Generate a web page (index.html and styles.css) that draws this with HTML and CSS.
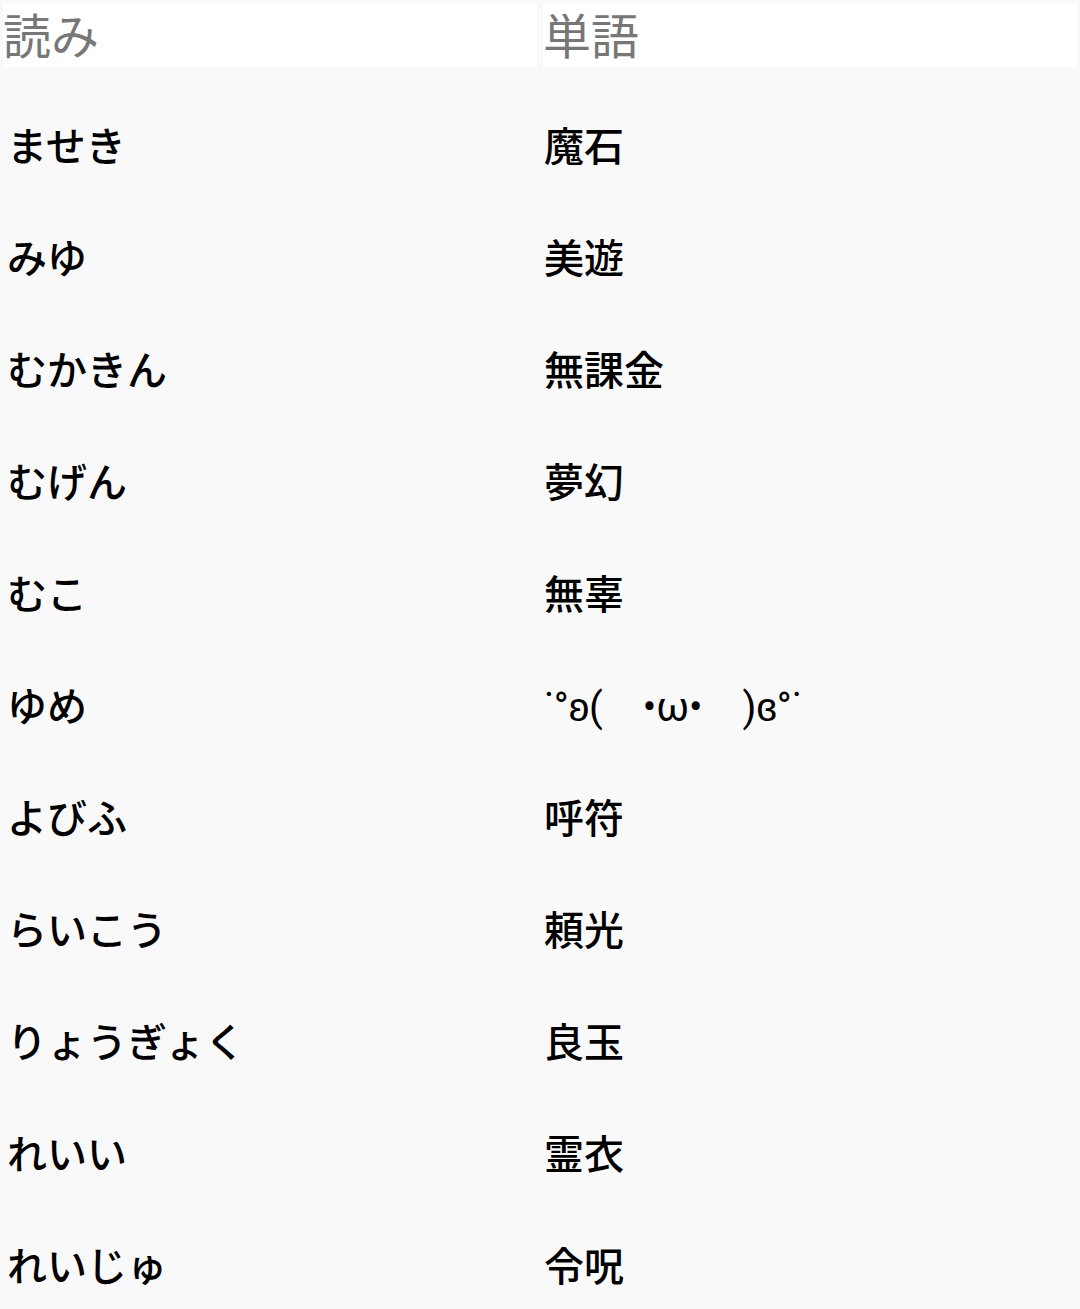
FILE: index.html
```html
<!DOCTYPE html>
<html lang="ja">
<head>
<meta charset="utf-8">
<link rel="stylesheet" href="styles.css">
</head>
<body>
<div class="table">
  <div class="head">読み</div>
  <div class="head">単語</div>
</div>
<div class="table rows">
  <div class="cell left">ませき</div><div class="cell right">魔石</div>
  <div class="cell left">みゆ</div><div class="cell right">美遊</div>
  <div class="cell left">むかきん</div><div class="cell right">無課金</div>
  <div class="cell left">むげん</div><div class="cell right">夢幻</div>
  <div class="cell left">むこ</div><div class="cell right">無辜</div>
  <div class="cell left">ゆめ</div><div class="cell right kaomoji">˙°ʚ(　•ω•　)ɞ°˙</div>
  <div class="cell left">よびふ</div><div class="cell right">呼符</div>
  <div class="cell left">らいこう</div><div class="cell right">頼光</div>
  <div class="cell left">りょうぎょく</div><div class="cell right">良玉</div>
  <div class="cell left">れいい</div><div class="cell right">霊衣</div>
  <div class="cell left">れいじゅ</div><div class="cell right">令呪</div>
</div>
</body>
</html>
```

FILE: styles.css
```css
html, body {
  margin: 0;
  padding: 0;
  background: #f9f9f9;
  font-family: Roboto, "Noto Sans CJK JP", sans-serif;
}
.table {
  display: grid;
  grid-template-columns: 1fr 1fr;
  column-gap: 6px;
  padding: 3px 3px 0;
}
.head {
  box-sizing: border-box;
  background: #ffffff;
  height: 64px;
  padding-top: 6px;
  line-height: 58px;
  font-size: 48px;
  color: #777777;
  white-space: nowrap;
}
.rows {
  margin-top: 18px;
}
.cell {
  height: 112px;
  display: flex;
  align-items: center;
  font-size: 40px;
  font-weight: 500;
  color: #000000;
  white-space: nowrap;
}
.left {
  padding-left: 4px;
}
.right {
  padding-left: 1px;
}
.kaomoji {
  font-weight: 400;
}
```
